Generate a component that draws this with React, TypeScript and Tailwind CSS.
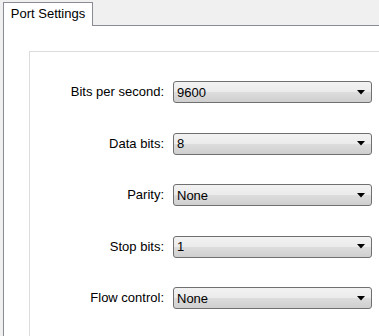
const rows = [
  { label: "Bits per second:", value: "9600" },
  { label: "Data bits:", value: "8" },
  { label: "Parity:", value: "None" },
  { label: "Stop bits:", value: "1" },
  { label: "Flow control:", value: "None" },
];

function Combo({ value }: { value: string }) {
  return (
    <div className="flex h-[22px] items-center justify-between rounded-[3px] border border-[#707070] bg-[linear-gradient(to_bottom,#f2f2f2_0%,#ebebeb_50%,#dddddd_50%,#cfcfcf_100%)] pl-[3px] pr-[6px]">
      <span className="leading-none">{value}</span>
      <svg width="8" height="5" viewBox="0 0 8 5">
        <path d="M0 0H8L4 4.5Z" fill="#000" />
      </svg>
    </div>
  );
}

export default function App() {
  return (
    <div className="h-[336px] w-[379px] overflow-hidden bg-[#f0f0f0] font-['Liberation_Sans',Arial,sans-serif] text-[13px] text-black">
      {/* tab strip */}
      <div className="flex h-[26px] items-end pl-[3px]">
        <div className="flex h-[24px] w-[90px] items-center justify-center border-x border-t border-[#898c95] bg-white pb-[2px]">
          Port Settings
        </div>
        <div className="h-px flex-1 bg-[#898c95]" />
      </div>

      {/* tab pane */}
      <div className="ml-[3px] h-[310px] border-l border-[#898c95] bg-white pl-[25px] pt-[25px]">
        <div className="h-full border-l border-t border-[#dcdcdc] pt-[29px]">
          <div className="grid grid-cols-[134px_199px] gap-x-[9px] gap-y-[29.5px]">
            {rows.map((r) => (
              <div key={r.label} className="contents">
                <div className="flex h-[22px] items-center justify-end">{r.label}</div>
                <Combo value={r.value} />
              </div>
            ))}
          </div>
        </div>
      </div>
    </div>
  );
}
